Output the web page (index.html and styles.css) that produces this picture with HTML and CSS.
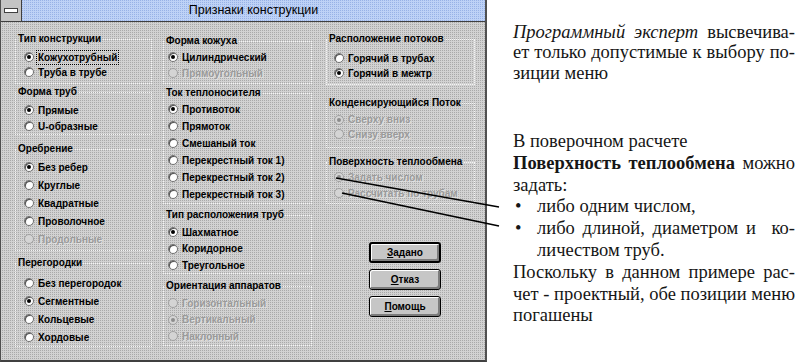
FILE: index.html
```html
<!DOCTYPE html>
<html>
<head>
<meta charset="utf-8" />
<title>Признаки конструкции</title>
<link rel="stylesheet" href="styles.css">
</head>
<body>
<div class="dialog">
  <div class="titlebar">
    <div class="sysmenu"><span></span></div>
    <div class="title">Признаки конструкции</div>
  </div>
  <div class="panes">
    <div class="col col1">
      <fieldset class="g-type">
        <legend>Тип конструкции</legend>
        <div class="opt on"><span class="rb"></span><span class="focus">Кожухотрубный</span></div>
        <div class="opt"><span class="rb"></span>Труба в трубе</div>
      </fieldset>
      <fieldset class="g-tubes">
        <legend>Форма труб</legend>
        <div class="opt on"><span class="rb"></span>Прямые</div>
        <div class="opt"><span class="rb"></span>U-образные</div>
      </fieldset>
      <fieldset class="g-fins">
        <legend>Оребрение</legend>
        <div class="opt on"><span class="rb"></span>Без ребер</div>
        <div class="opt"><span class="rb"></span>Круглые</div>
        <div class="opt"><span class="rb"></span>Квадратные</div>
        <div class="opt"><span class="rb"></span>Проволочное</div>
        <div class="opt dis"><span class="rb"></span>Продольные</div>
      </fieldset>
      <fieldset class="g-baffles">
        <legend>Перегородки</legend>
        <div class="opt"><span class="rb"></span>Без перегородок</div>
        <div class="opt on"><span class="rb"></span>Сегментные</div>
        <div class="opt"><span class="rb"></span>Кольцевые</div>
        <div class="opt"><span class="rb"></span>Хордовые</div>
      </fieldset>
    </div>

    <div class="col col2">
      <fieldset class="g-shell">
        <legend>Форма кожуха</legend>
        <div class="opt on"><span class="rb"></span>Цилиндрический</div>
        <div class="opt dis"><span class="rb"></span>Прямоугольный</div>
      </fieldset>
      <fieldset class="g-flow">
        <legend>Ток теплоносителя</legend>
        <div class="opt on"><span class="rb"></span>Противоток</div>
        <div class="opt"><span class="rb"></span>Прямоток</div>
        <div class="opt"><span class="rb"></span>Смешаный ток</div>
        <div class="opt"><span class="rb"></span>Перекрестный ток 1)</div>
        <div class="opt"><span class="rb"></span>Перекрестный ток 2)</div>
        <div class="opt"><span class="rb"></span>Перекрестный ток 3)</div>
      </fieldset>
      <fieldset class="g-layout">
        <legend>Тип расположения труб</legend>
        <div class="opt on"><span class="rb"></span>Шахматное</div>
        <div class="opt"><span class="rb"></span>Коридорное</div>
        <div class="opt"><span class="rb"></span>Треугольное</div>
      </fieldset>
      <fieldset class="g-orient">
        <legend>Ориентация аппаратов</legend>
        <div class="opt dis"><span class="rb"></span>Горизонтальный</div>
        <div class="opt dis on"><span class="rb"></span>Вертикальный</div>
        <div class="opt dis"><span class="rb"></span>Наклонный</div>
      </fieldset>
    </div>

    <div class="col col3">
      <fieldset class="g-streams">
        <legend>Расположение потоков</legend>
        <div class="opt"><span class="rb"></span>Горячий в трубах</div>
        <div class="opt on"><span class="rb"></span>Горячий в межтр</div>
      </fieldset>
      <fieldset class="g-cond">
        <legend>Конденсирующийся Поток</legend>
        <div class="opt dis on"><span class="rb"></span>Сверху вниз</div>
        <div class="opt dis"><span class="rb"></span>Снизу вверх</div>
      </fieldset>
      <fieldset class="g-surface">
        <legend>Поверхность теплообмена</legend>
        <div class="opt dis on"><span class="rb"></span>Задать числом</div>
        <div class="opt dis"><span class="rb"></span>Рассчитать по трубам</div>
      </fieldset>
      <div class="buttons">
        <div class="btn default"><u>З</u>адано</div>
        <div class="btn"><u>О</u>тказ</div>
        <div class="btn"><u>П</u>омощь</div>
      </div>
    </div>
  </div>
</div>

<div class="note">
  <div class="para first">
    <div class="j"><i>Программный эксперт</i> высвечива-</div>
    <div class="j">ет только допустимые к выбору по-</div>
    <div>зиции меню</div>
  </div>
  <div class="para second">
    <div>В поверочном расчете</div>
    <div class="j"><b>Поверхность теплообмена</b> можно</div>
    <div>задать:</div>
    <div class="item"><span class="dot">&bull;</span><div>либо одним числом,</div></div>
    <div class="item"><span class="dot">&bull;</span><div>
      <div class="j">либо длиной, диаметром и &nbsp;ко-</div>
      <div>личеством труб.</div>
    </div></div>
    <div class="j">Поскольку в данном примере рас-</div>
    <div class="j">чет - проектный, обе позиции меню</div>
    <div>погашены</div>
  </div>
</div>

<!-- pointer lines from the text to the dialog options -->
<svg class="pointers" width="800" height="364" viewBox="0 0 800 364">
  <line x1="336" y1="178" x2="499" y2="207" />
  <line x1="342" y1="193" x2="499" y2="226" />
</svg>
</body>
</html>
```

FILE: styles.css
```css
body {
  margin: 0;
  width: 800px;
  height: 364px;
  overflow: hidden;
  background: #fff;
  display: flex;
  position: relative;
}
.dialog {
  width: 484px;
  height: 360px;
  border-left: 1px solid #505050;
  border-right: 2px solid #505050;
  border-bottom: 2px solid #404040;
  display: flex;
  flex-direction: column;
  background: conic-gradient(#a9a9a9 0 25%, #d2d2d2 0) 0 0 / 2px 2px;
  font: bold 10px 'Liberation Sans', Arial, sans-serif;
  color: #000;
}
.titlebar {
  height: 21px;
  border-bottom: 1px solid #404040;
  display: flex;
  background: conic-gradient(#98b2e6 0 25%, #bed2f6 0) 0 0 / 2px 2px;
}
.sysmenu {
  width: 20px;
  border-right: 1px solid #404040;
  background: #c4c4c4;
  display: flex;
  align-items: center;
  justify-content: center;
}
.sysmenu span {
  width: 12px;
  height: 3px;
  background: #fff;
  border: 1px solid #404040;
}
.title {
  flex: 1;
  text-align: center;
  font: 12.5px/21px 'Liberation Sans', Arial, sans-serif;
}
.panes {
  flex: 1;
  display: flex;
  padding-left: 14px;
}
.col {
  display: flex;
  flex-direction: column;
}
.col1 { width: 137px; }
.col2 { width: 149px; margin-left: 11px; }
.col3 { width: 149px; margin-left: 14px; }

fieldset {
  margin: 0;
  padding: 0;
  min-width: 0;
  border: 1px dotted #f4f4f4;
}
legend {
  padding: 0 1px;
  margin-left: 1px;
  height: 12px;
  line-height: 12px;
  white-space: nowrap;
}
.opt {
  display: flex;
  align-items: center;
  gap: 4px;
  padding-left: 8px;
  white-space: nowrap;
}
.col2 .opt { padding-left: 4px; }
.col3 .opt { padding-left: 7px; }
.rb {
  width: 10px;
  height: 10px;
  flex: none;
  box-sizing: border-box;
  border-radius: 50%;
  background: #fff;
  border: 1px solid #707070;
  box-shadow: inset 1px 1px 0 #505050;
  position: relative;
}
.on .rb::after {
  content: '';
  position: absolute;
  left: 2px;
  top: 2px;
  width: 4px;
  height: 4px;
  border-radius: 50%;
  background: #000;
}
.dis {
  color: #9a9a9a;
  text-shadow: 1px 1px 0 #e2e2e2;
}
.dis .rb {
  background: #d4d4d4;
  border-color: #a0a0a0;
  box-shadow: none;
}
.dis.on .rb::after {
  background: #8c8c8c;
}
.focus {
  outline: 1px dotted #000;
  outline-offset: 1px;
}

/* column 1 */
.g-type { margin-top: 11px; padding: 4.5px 0 3px; }
.g-type .opt { height: 15px; }
.g-tubes { margin-top: 2.5px; padding: 4px 0 0; }
.g-tubes .opt { height: 16px; }
.g-fins { margin-top: 8px; padding: 3px 0 2px; }
.g-fins .opt { height: 18px; }
.g-baffles { margin-top: 6px; padding: 5px 0 0; }
.g-baffles .opt { height: 18px; }

/* column 2 */
.g-shell { margin-top: 13px; padding: 2px 0 2px; }
.g-shell .opt { height: 16px; }
.g-flow { margin-top: 3px; padding: 1.5px 0 0; }
.g-flow .opt { height: 17px; }
.g-layout { margin-top: 5.5px; padding: 2.75px 0 0; }
.g-layout .opt { height: 16.5px; }
.g-orient { margin-top: 5.75px; padding: 2.75px 0 1px; }
.g-orient .opt { height: 16.5px; }

/* column 3 */
.g-streams { margin-top: 11px; padding: 5.5px 0 3px; }
.g-streams .opt { height: 15px; }
.g-cond { margin-top: 12.5px; padding: 3.5px 0 5px; }
.g-cond .opt { height: 14.5px; }
.g-surface { margin-top: 8.5px; padding: 1px 0 2px; }
.g-surface .opt { height: 16px; }

.buttons {
  margin: 38px 0 0 43px;
  display: flex;
  flex-direction: column;
  gap: 6px;
}
.btn {
  width: 72px;
  height: 21px;
  box-sizing: border-box;
  border: 1px solid #000;
  border-radius: 3px;
  background: #c6c6c6;
  box-shadow: inset 1px 1px 0 #fff, inset -2px -2px 0 #7c7c7c;
  display: flex;
  align-items: center;
  justify-content: center;
}
.btn.default {
  border-width: 2px;
}

.note {
  width: 282px;
  margin-left: 26px;
  font-family: 'Liberation Serif', 'Times New Roman', serif;
  font-size: 18.5px;
  color: #161616;
}
.para.first {
  margin-top: 21.75px;
  line-height: 20.5px;
}
.para.second {
  margin-top: 47.85px;
  line-height: 21.8px;
}
.j {
  text-align: justify;
  text-align-last: justify;
}
.item {
  display: flex;
}
.item .dot {
  width: 24px;
  flex: none;
  padding-left: 2px;
  box-sizing: border-box;
}
.item > div {
  flex: 1;
}

.pointers {
  position: absolute;
  left: 0;
  top: 0;
  pointer-events: none;
}
.pointers line {
  stroke: #000;
  stroke-width: 1.6;
}
```
